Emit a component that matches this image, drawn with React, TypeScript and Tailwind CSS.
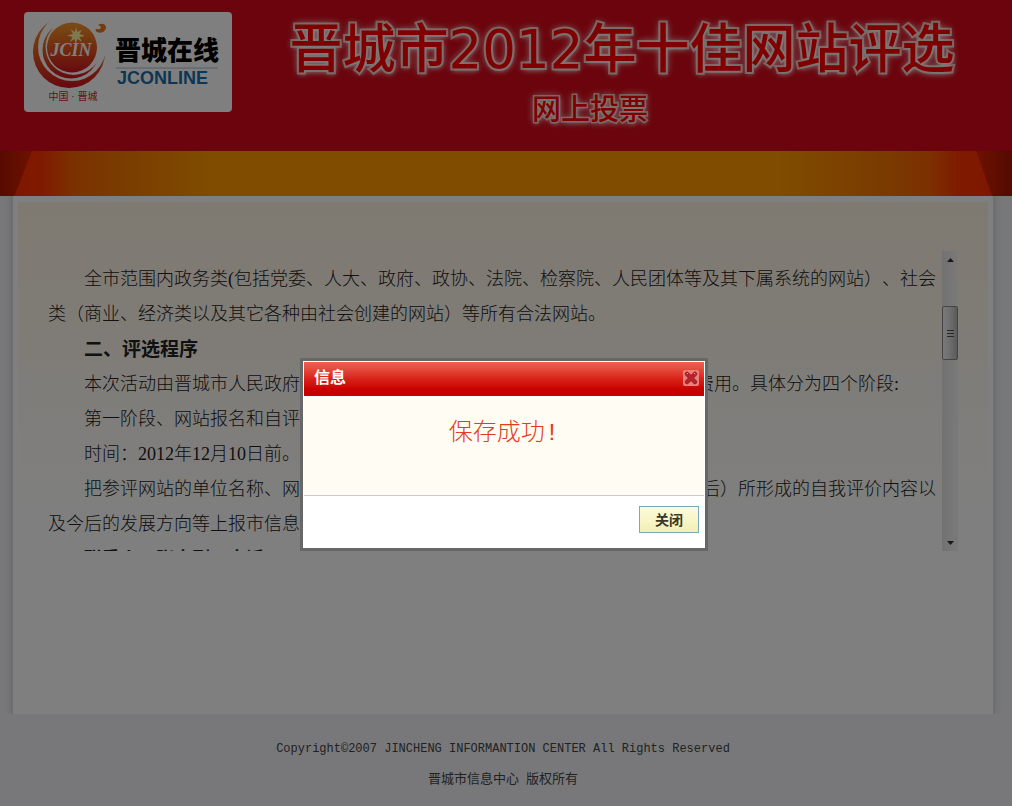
import { useState } from "react";

const bodyFont = "font-['Liberation_Serif','Noto_Sans_CJK_SC',sans-serif]";
const sansFont = "font-['Liberation_Sans','Noto_Sans_CJK_SC',sans-serif]";

function Logo() {
  return (
    <a href="#" aria-label="晋城在线" className="block w-52 shrink-0 rounded bg-white">
      <svg viewBox="0 0 208 100" className="block h-[100px] w-52">
        <defs>
          <linearGradient id="disc" x1="0" y1="0" x2="0" y2="1">
            <stop offset="0" stopColor="#f49a2c" />
            <stop offset="0.5" stopColor="#e25a1c" />
            <stop offset="1" stopColor="#d01420" />
          </linearGradient>
        </defs>
        {/* each crescent is a disc with an offset white disc over it */}
        <circle cx="45" cy="40" r="36" fill="url(#disc)" />
        <circle cx="48" cy="35" r="34" fill="#fff" />
        <circle cx="47" cy="38" r="28.5" fill="url(#disc)" />
        <circle cx="49.5" cy="35" r="28" fill="#fff" />
        <circle cx="48" cy="35.5" r="25" fill="url(#disc)" />
        <path d="M73 20C78 22 82 19 82 15C81 11 77 11 74 13C78 14 78 18 73 17C71 17 71 19 73 20Z" fill="#e8781c" />
        <path
          d="M52 15L53.5 20L58 17.5L55.5 22L61 24L55.5 25L58 30L53.5 27L51.5 32L50.5 27L46 30L48.5 25L43 23.5L49 22L46.5 17L51 20Z"
          fill="#fff3a0"
        />
        <text
          x="47"
          y="44"
          textAnchor="middle"
          fontSize="18"
          fill="#fff"
          className="font-['Liberation_Serif',serif] font-bold italic"
        >
          JCIN
        </text>
        <text x="49" y="88" textAnchor="middle" fontSize="10" fill="#c8242c" className={sansFont}>
          中国 · 晋城
        </text>
        <text x="91" y="48" fontSize="26" fill="#000" className={`${sansFont} font-black`}>
          晋城在线
        </text>
        <path d="M92 56H194" stroke="#a8bccc" strokeWidth="1" />
        <text x="93" y="72" fontSize="18" fill="#1c6ca8" className={`${sansFont} font-bold`}>
          JCONLINE
        </text>
      </svg>
    </a>
  );
}

function Header() {
  return (
    <header>
      <div className="flex h-[151px] items-start bg-[#d60818] pt-3 pl-6">
        <Logo />
        <div className="flex flex-1 flex-col items-center px-4 text-[#ff0000] [paint-order:stroke_fill] [text-shadow:0_0_6px_#ffffffc0,0_0_10px_#ffffffb0,1px_2px_4px_#ffffff90]">
          <h1 className="font-['DejaVu_Sans','Noto_Sans_CJK_SC',sans-serif] text-[53px] leading-[76px] font-medium whitespace-nowrap [-webkit-text-stroke:4px_#f0b4b0]">
            晋城市2012年十佳网站评选
          </h1>
          <p
            className={`${sansFont} pr-16 text-[29px] leading-[44px] font-medium whitespace-nowrap [-webkit-text-stroke:3px_#f0b4b0]`}
          >
            网上投票
          </p>
        </div>
      </div>
      <div className="flex h-[45px] justify-between bg-[linear-gradient(90deg,#ff2c00_0,#ff3400_40px,#f86400_75px,#f47400_110px,#ff9800_210px,#ff9800_780px,#f47400_890px,#f86000_930px,#ff3400_960px,#ff2c00_100%)]">
        <span className="w-8 bg-linear-to-r from-[#b01400] to-[#dc2400] [clip-path:polygon(0_0,100%_0,45%_100%,0_100%)]" />
        <span className="w-9 bg-linear-to-r from-[#dc2400] to-[#a81400] [clip-path:polygon(0_0,100%_0,100%_100%,45%_100%)]" />
      </div>
    </header>
  );
}

function Scrollbar() {
  return (
    <div className="flex w-4 shrink-0 flex-col items-stretch bg-linear-to-r from-[#e4e4e6] to-[#f4f4f4]">
      <button type="button" aria-label="向上滚动" className="flex h-[17px] items-center justify-center">
        <svg viewBox="0 0 7 4" className="h-1 w-[7px]">
          <path d="M0 4L3.5 0L7 4Z" fill="#303030" />
        </svg>
      </button>
      <div className="flex-1 pt-[38px]">
        <div className="flex h-[54px] flex-col items-center justify-center gap-0.5 rounded-xs border border-[#888] bg-linear-to-r from-[#f4f4f4] via-[#dcdcdc] to-[#b4b4b8]">
          <span className="h-px w-[7px] bg-[#505050]" />
          <span className="h-px w-[7px] bg-[#505050]" />
          <span className="h-px w-[7px] bg-[#505050]" />
        </div>
      </div>
      <button type="button" aria-label="向下滚动" className="flex h-[17px] items-center justify-center">
        <svg viewBox="0 0 7 4" className="h-1 w-[7px]">
          <path d="M0 0L3.5 4L7 0Z" fill="#303030" />
        </svg>
      </button>
    </div>
  );
}

function Article() {
  return (
    <article
      className={`${bodyFont} h-[300px] min-w-0 flex-1 overflow-hidden pt-[11px] text-lg leading-[35px] font-light text-[#222] [text-spacing-trim:space-all]`}
    >
      <p className="indent-9">
        全市范围内政务类(包括党委、人大、政府、政协、法院、检察院、人民团体等及其下属系统的网站）、社会类（商业、经济类以及其它各种由社会创建的网站）等所有合法网站。
      </p>
      <h2 className="indent-9 text-[19px] leading-[35px] font-bold">二、评选程序</h2>
      <p className="indent-9">
        本次活动由晋城市人民政府信息中心主办，免费参加，不向参评单位收取任何费用。具体分为四个阶段:
      </p>
      <p className="indent-9">第一阶段、网站报名和自评阶段。</p>
      <p className="indent-9">时间：2012年12月10日前。</p>
      <p className="indent-9">
        把参评网站的单位名称、网址、网站建设情况以及自评材料(对照评选标准评审后）所形成的自我评价内容以及今后的发展方向等上报市信息中心。
      </p>
      <p className="indent-9 font-bold">联系人：张志刚　电话：</p>
    </article>
  );
}

function Dialog({ onClose }: { onClose: () => void }) {
  return (
    <div className={`${sansFont} fixed inset-0 flex items-start justify-center bg-black/50 pt-[358px] pr-1`}>
      <section
        role="dialog"
        aria-modal="true"
        aria-labelledby="dialog-title"
        className="w-[408px] border-3 border-[#676767] bg-white"
      >
        <div className="border border-white">
          <div className="flex h-[34px] items-center justify-between bg-linear-to-b from-[#f06050] via-[#d82018] via-50% to-[#c80000] to-80% pr-[5px] pb-0.5 pl-2.5">
            <h2 id="dialog-title" className="text-base leading-5 font-bold text-white">
              信息
            </h2>
            <button
              type="button"
              aria-label="关闭窗口"
              onClick={onClose}
              className="flex size-4 items-center justify-center rounded-xs bg-[#e8807c]"
            >
              <svg viewBox="0 0 16 16" className="size-4">
                <path d="M4 4L12 12M12 4L4 12" stroke="#a01c24" strokeWidth="4.5" strokeLinecap="round" />
                <path d="M4 4L12 12M12 4L4 12" stroke="#b8242c" strokeWidth="2.5" strokeLinecap="round" />
                <path d="M3.8 4.2L5 3M11 3L12.2 4.2" stroke="#f0a8a4" strokeWidth="1" />
              </svg>
            </button>
          </div>
          <div className="h-[100px] border-b border-[#ccc8c4] bg-[#fffcf4] pt-5">
            <p className="text-center font-['Liberation_Mono','Noto_Sans_CJK_SC',monospace] text-2xl leading-9 font-light text-[#e43c1c]">
              保存成功!
            </p>
          </div>
          <div className="flex h-[51px] justify-end pt-2.5 pr-[5px]">
            <button
              type="button"
              onClick={onClose}
              className="h-[27px] w-[60px] border border-[#7ca8b8] bg-linear-to-b from-[#fcfcdc] to-[#f4eeb4] text-sm leading-none font-bold text-[#383828]"
            >
              关闭
            </button>
          </div>
        </div>
      </section>
    </div>
  );
}

export default function App() {
  const [open, setOpen] = useState(true);

  return (
    <div className="min-h-screen bg-[#f0f1f4]">
      <Header />
      <div className="overflow-hidden pr-[19px] pl-[13px]">
        <main className="min-h-[518px] bg-white px-[5px] pt-1.5 shadow-[0_0_0_2px_#dcdce2,0_0_8px_2px_#d4d4dc]">
          <div className="bg-linear-to-b from-[#fff4e2] to-white to-90% px-[30px] pt-[49px]">
            <div className="flex">
              <Article />
              <Scrollbar />
            </div>
          </div>
        </main>
      </div>
      <footer className="pt-5 pr-1.5 text-center text-[#444]">
        <p className="font-['Liberation_Mono',monospace] text-xs leading-[30px]">
          Copyright©2007 JINCHENG INFORMANTION CENTER All Rights Reserved
        </p>
        <p className={`${sansFont} text-[13px] leading-[30px]`}>晋城市信息中心&nbsp; 版权所有</p>
      </footer>
      {open ? <Dialog onClose={() => setOpen(false)} /> : null}
    </div>
  );
}
